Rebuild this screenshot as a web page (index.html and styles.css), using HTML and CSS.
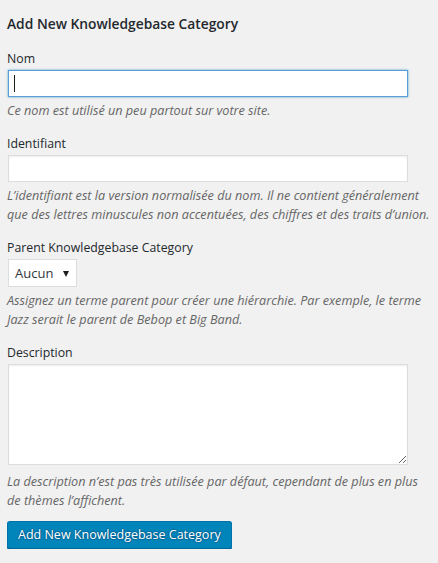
FILE: index.html
```html
<!DOCTYPE html>
<html lang="fr">
<head>
<meta charset="utf-8">
<title>Add New Knowledgebase Category</title>
<link rel="stylesheet" href="styles.css">
</head>
<body>
<div class="form-wrap">
  <h2 class="form-title">Add New Knowledgebase Category</h2>
  <form class="term-form">
    <div class="form-field">
      <label class="field-label" for="tag-name">Nom</label>
      <div class="caret-wrap">
        <input class="text-input is-focus" type="text" id="tag-name" name="tag-name" value="">
      </div>
      <p class="description">Ce nom est utilisé un peu partout sur votre site.</p>
    </div>
    <div class="form-field">
      <label class="field-label" for="tag-slug">Identifiant</label>
      <input class="text-input" type="text" id="tag-slug" name="slug" value="">
      <p class="description">L’identifiant est la version normalisée du nom. Il ne contient généralement que des lettres minuscules non accentuées, des chiffres et des traits d’union.</p>
    </div>
    <div class="form-field">
      <label class="field-label" for="parent">Parent Knowledgebase Category</label>
      <div class="select-wrap">
        <select class="select-input" id="parent" name="parent">
          <option value="-1">Aucun</option>
        </select>
      </div>
      <p class="description">Assignez un terme parent pour créer une hiérarchie. Par exemple, le terme Jazz serait le parent de Bebop et Big Band.</p>
    </div>
    <div class="form-field">
      <label class="field-label" for="tag-description">Description</label>
      <textarea class="textarea-input" id="tag-description" name="description"></textarea>
      <p class="description">La description n’est pas très utilisée par défaut, cependant de plus en plus de thèmes l’affichent.</p>
    </div>
    <div class="submit-row">
      <button type="button" class="button-primary">Add New Knowledgebase Category</button>
    </div>
  </form>
</div>
</body>
</html>
```

FILE: styles.css
```css
html, body {
  margin: 0;
  padding: 0;
  background: #f1f1f1;
}

body {
  font-family: "Open Sans", "Noto Sans", "DejaVu Sans", sans-serif;
  color: #23282d;
}

.form-wrap {
  width: 426px;
  padding: 0 5px 0 7px;
}

.form-title {
  margin: 0;
  padding-top: 14px;
  font-size: 13.8px;
  line-height: 20px;
  font-weight: 600;
  color: #23282d;
}

.term-form {
  margin: 0;
  padding-top: 15px;
}

.form-field {
  display: flex;
  flex-direction: column;
  align-items: stretch;
  margin-bottom: 14px;
}

.field-label {
  display: block;
  font-size: 12.3px;
  line-height: 19px;
  margin-bottom: 1px;
  color: #23282d;
}

.text-input,
.textarea-input,
.select-input {
  font-family: inherit;
  box-sizing: border-box;
  margin: 1px;
  border: 1px solid #ddd;
  background: #fff;
  color: #32373c;
  box-shadow: inset 0 1px 2px rgba(0, 0, 0, 0.07);
  outline: none;
  border-radius: 0;
}

.text-input {
  display: block;
  align-self: flex-start;
  width: 400px;
  height: 27px;
  padding: 3px 5px;
  font-size: 13px;
}

.text-input.is-focus {
  border-color: #5b9dd9;
  box-shadow: 0 0 2px rgba(30, 140, 190, 0.8);
}

.caret-wrap {
  position: relative;
  align-self: flex-start;
}

.caret-wrap::after {
  content: "";
  position: absolute;
  left: 7px;
  top: 6px;
  width: 1px;
  height: 17px;
  background: #1e1e1e;
}

.select-wrap {
  position: relative;
  align-self: flex-start;
}

.select-input {
  display: block;
  -webkit-appearance: none;
  appearance: none;
  width: 69px;
  height: 28px;
  padding: 0 0 0 6px;
  font-size: 13px;
  color: #32373c;
  box-shadow: none;
  line-height: 26px;
}

.select-wrap::after {
  content: "";
  position: absolute;
  left: 56px;
  top: 13px;
  width: 0;
  height: 0;
  border-left: 3px solid transparent;
  border-right: 3px solid transparent;
  border-top: 6px solid #1e1e1e;
  pointer-events: none;
}

.textarea-input {
  display: block;
  align-self: flex-start;
  width: 400px;
  height: 101px;
  margin-bottom: 4px;
  padding: 2px 6px;
  font-size: 13px;
  resize: both;
}

.description {
  margin: 3px 0 0;
  font-size: 12.65px;
  line-height: 19px;
  font-style: italic;
  color: #666;
}

.submit-row {
  margin-top: -3px;
}

.button-primary {
  font-family: inherit;
  display: inline-block;
  box-sizing: border-box;
  height: 28px;
  margin: 0;
  padding: 0 10px 1px;
  font-size: 12.5px;
  line-height: 26px;
  color: #fff;
  background: #0085ba;
  border: 1px solid #0073aa;
  border-bottom-color: #006799;
  border-radius: 3px;
  box-shadow: 0 1px 0 #006799;
  text-shadow: 0 -1px 1px #006799, 1px 0 1px #006799, 0 1px 1px #006799, -1px 0 1px #006799;
  cursor: pointer;
}
```
